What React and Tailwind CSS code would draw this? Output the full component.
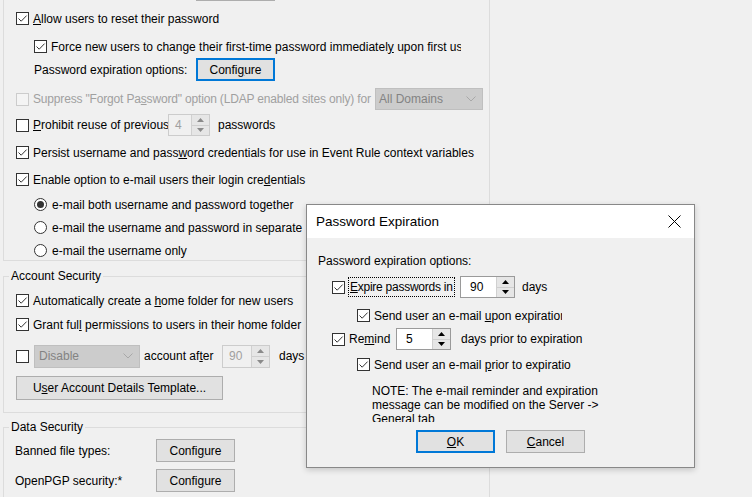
import React from "react";

function Check({ checked = false, disabled = false }) {
  return (
    <span
      className={
        disabled
          ? "flex h-[13px] w-[13px] shrink-0 items-center justify-center border border-[#cccccc] bg-[#f4f4f4]"
          : "flex h-[13px] w-[13px] shrink-0 items-center justify-center border border-[#333333] bg-white"
      }
    >
      {checked && (
        <svg width="11" height="11" viewBox="0 0 11 11">
          <path d="M1.5 5.5 L4.2 8.2 L9.6 2.6" fill="none" stroke="#333333" strokeWidth="1" />
        </svg>
      )}
    </span>
  );
}

function Radio({ selected = false }) {
  return (
    <span className="flex h-[13px] w-[13px] shrink-0 items-center justify-center rounded-full border border-[#333333] bg-white">
      {selected && <span className="h-[7px] w-[7px] rounded-full bg-[#333333]" />}
    </span>
  );
}

function Arrows({ disabled = false }) {
  const c = disabled ? "#8a8a8a" : "#000000";
  return (
    <div className="flex w-[18px] shrink-0 flex-col border-l border-[#d0d0d0] bg-[#e6e6e6]">
      <div className="flex flex-1 items-center justify-center border-b border-[#cfcfcf]">
        <svg width="7" height="4" viewBox="0 0 7 4">
          <path d="M0 4 L3.5 0 L7 4 Z" fill={c} />
        </svg>
      </div>
      <div className="flex flex-1 items-center justify-center">
        <svg width="7" height="4" viewBox="0 0 7 4">
          <path d="M0 0 L3.5 4 L7 0 Z" fill={c} />
        </svg>
      </div>
    </div>
  );
}

function Btn({ children, focused = false, className = "" }) {
  return (
    <div
      className={
        (focused
          ? "flex shrink-0 items-center justify-center border-2 border-[#0078d7] bg-[#e1e1e1] "
          : "flex shrink-0 items-center justify-center border border-[#adadad] bg-[#e1e1e1] ") + className
      }
    >
      {children}
    </div>
  );
}

function Chevron() {
  return (
    <svg width="10" height="6" viewBox="0 0 10 6">
      <path d="M0.5 0.5 L5 5 L9.5 0.5" fill="none" stroke="#a8a8a8" strokeWidth="1" />
    </svg>
  );
}

export default function App() {
  return (
    <div className="relative h-[497px] w-[752px] overflow-hidden bg-[#f0f0f0] font-['Liberation_Sans',Arial,sans-serif] text-[12px] leading-[14px] text-black">
      <div className="h-full w-[490px] border-r border-[#dcdcdc]">
        {/* Group 1 */}
        <div className="ml-[3px] flex h-[261px] w-[486px] flex-col border-b border-l border-[#dcdcdc]">
          <div className="ml-[192px] h-[1px] w-[79px] shrink-0 bg-[#adadad]" />
          <div className="mt-[11px] flex h-[13px] items-center pl-[12px]">
            <Check checked />
            <span className="ml-[4px] whitespace-nowrap">
              <u>A</u>llow users to reset their password
            </span>
          </div>
          <div className="mt-[15px] flex h-[13px] items-center pl-[30px]">
            <Check checked />
            <span className="ml-[4px] w-[410px] overflow-hidden whitespace-nowrap">
              Force new users to change their first-time password immediatel<u>y</u> upon first use
            </span>
          </div>
          <div className="mt-[5px] flex h-[23px] items-center pl-[30px]">
            <span className="w-[162px] whitespace-nowrap">Password expiration options:</span>
            <Btn focused className="h-[23px] w-[79px]">
              <span>
                Confi<u>g</u>ure
              </span>
            </Btn>
          </div>
          <div className="mt-[7px] flex h-[22px] items-center pl-[12px]">
            <Check disabled />
            <span className="ml-[4px] w-[342px] whitespace-nowrap tracking-[-0.17px] text-[#a0a0a0]">
              Suppress "Forgot Pa<u>s</u>sword" option (LDAP enabled sites only) for
            </span>
            <div className="flex h-[22px] w-[108px] items-center justify-between border border-[#bfbfbf] bg-[#cccccc] pl-[3px] pr-[6px] text-[#838383]">
              <span>All Domains</span>
              <Chevron />
            </div>
          </div>
          <div className="mt-[4px] flex h-[22px] items-center pl-[12px]">
            <Check />
            <span className="ml-[4px] w-[135px] whitespace-nowrap">
              <u>P</u>rohibit reuse of previous
            </span>
            <div className="flex h-[22px] w-[42px] border border-[#cccccc] bg-[#f0f0f0]">
              <div className="flex flex-1 items-center pl-[6px] text-[#a0a0a0]">4</div>
              <Arrows disabled />
            </div>
            <span className="ml-[8px]">passwords</span>
          </div>
          <div className="mt-[10px] flex h-[13px] items-center pl-[12px]">
            <Check checked />
            <span className="ml-[4px] whitespace-nowrap">
              Persist username and pass<u>w</u>ord credentials for use in Event Rule context variables
            </span>
          </div>
          <div className="mt-[14px] flex h-[13px] items-center pl-[12px]">
            <Check checked />
            <span className="ml-[4px] whitespace-nowrap">
              Enable option to e-mail users their login cre<u>d</u>entials
            </span>
          </div>
          <div className="mt-[12px] flex h-[13px] items-center pl-[30px]">
            <Radio selected />
            <span className="ml-[5px] whitespace-nowrap">e-mail both username and password together</span>
          </div>
          <div className="mt-[10px] flex h-[13px] items-center pl-[30px]">
            <Radio />
            <span className="ml-[5px] w-[253px] overflow-hidden whitespace-nowrap">e-mail the username and password in separate e-mails</span>
          </div>
          <div className="mt-[10px] flex h-[13px] items-center pl-[30px]">
            <Radio />
            <span className="ml-[5px] whitespace-nowrap">e-mail the username only</span>
          </div>
        </div>

        {/* Account Security */}
        <div className="relative ml-[3px] mt-[15px] flex h-[137px] w-[486px] flex-col border-b border-l border-t border-[#dcdcdc]">
          <span className="absolute left-[5px] top-[-8px] bg-[#f0f0f0] px-[2px]">Account Security</span>
          <div className="mt-[17px] flex h-[13px] items-center pl-[12px]">
            <Check checked />
            <span className="ml-[4px] whitespace-nowrap">
              Automatically create a <u>h</u>ome folder for new users
            </span>
          </div>
          <div className="mt-[11px] flex h-[13px] items-center pl-[12px]">
            <Check checked />
            <span className="ml-[4px] whitespace-nowrap">
              Grant ful<u>l</u> permissions to users in their home folder
            </span>
          </div>
          <div className="mt-[13px] flex h-[24px] items-center pl-[12px]">
            <Check />
            <div className="ml-[5px] flex h-[23px] w-[106px] items-center justify-between border border-[#bfbfbf] bg-[#cccccc] pl-[4px] pr-[6px] text-[#838383]">
              <span>Disable</span>
              <Chevron />
            </div>
            <span className="ml-[4px] w-[78px] whitespace-nowrap">
              account af<u>t</u>er
            </span>
            <div className="flex h-[23px] w-[48px] border border-[#cccccc] bg-[#f0f0f0]">
              <div className="flex flex-1 items-center pl-[6px] text-[#a0a0a0]">90</div>
              <Arrows disabled />
            </div>
            <span className="ml-[9px]">days</span>
          </div>
          <div className="mt-[8px] flex h-[24px] items-center pl-[12px]">
            <Btn className="h-[24px] w-[207px]">
              <span>
                U<u>s</u>er Account Details Template...
              </span>
            </Btn>
          </div>
        </div>

        {/* Data Security */}
        <div className="relative ml-[3px] mt-[14px] flex h-[90px] w-[486px] flex-col border-b border-l border-t border-[#dcdcdc]">
          <span className="absolute left-[5px] top-[-8px] bg-[#f0f0f0] px-[2px]">Data Security</span>
          <div className="mt-[11px] flex h-[23px] items-center pl-[11px]">
            <span className="w-[141px] whitespace-nowrap">Banned file types:</span>
            <Btn className="h-[23px] w-[79px]">
              <span>
                Confi<u>g</u>ure
              </span>
            </Btn>
          </div>
          <div className="mt-[7px] flex h-[23px] items-center pl-[11px]">
            <span className="w-[141px] whitespace-nowrap">OpenPGP security:*</span>
            <Btn className="h-[23px] w-[79px]">
              <span>
                Confi<u>g</u>ure
              </span>
            </Btn>
          </div>
        </div>
      </div>

      {/* Dialog */}
      <div className="absolute left-[306px] top-[204px] flex h-[264px] w-[389px] flex-col border border-[#888888] bg-[#f0f0f0] shadow-[0_2px_6px_rgba(0,0,0,0.18)]">
        <div className="flex h-[33px] shrink-0 items-center justify-between bg-white pl-[9px] pr-[13px]">
          <span className="text-[13.5px]">Password Expiration</span>
          <svg width="13" height="13" viewBox="0 0 13 13">
            <path d="M0.5 0.5 L12.5 12.5 M12.5 0.5 L0.5 12.5" fill="none" stroke="#000000" strokeWidth="1" />
          </svg>
        </div>
        <div className="mt-[16px] flex h-[14px] items-center pl-[11px]">
          <span>Password expiration options:</span>
        </div>
        <div className="mt-[8px] flex h-[22px] items-center pl-[25px]">
          <Check checked />
          <span className="ml-[3px] flex h-[20px] w-[107px] items-center border border-dotted border-black pl-[1px] whitespace-nowrap tracking-[-0.25px]">
            <span>
              <u>E</u>xpire passwords in
            </span>
          </span>
          <div className="ml-[5px] flex h-[22px] w-[55px] border border-[#9a9a9a] bg-white">
            <div className="flex flex-1 items-center pl-[9px]">90</div>
            <Arrows />
          </div>
          <span className="ml-[7px]">days</span>
        </div>
        <div className="mt-[11px] flex h-[13px] items-center pl-[50px]">
          <Check checked />
          <span className="ml-[4px] w-[188px] overflow-hidden whitespace-nowrap">
            Send user an e-mail <u>u</u>pon expiration
          </span>
        </div>
        <div className="mt-[6px] flex h-[22px] items-center pl-[25px]">
          <Check checked />
          <span className="ml-[4px] w-[47px] whitespace-nowrap">
            Re<u>m</u>ind
          </span>
          <div className="flex h-[22px] w-[55px] border border-[#9a9a9a] bg-white">
            <div className="flex flex-1 items-center pl-[9px]">5</div>
            <Arrows />
          </div>
          <span className="ml-[10px] whitespace-nowrap">days prior to expiration</span>
        </div>
        <div className="mt-[8px] flex h-[13px] items-center pl-[50px]">
          <Check checked />
          <span className="ml-[4px] w-[197px] overflow-hidden whitespace-nowrap">
            Send user an e-mail <u>p</u>rior to expiration
          </span>
        </div>
        <div className="mt-[13px] h-[38px] overflow-hidden pl-[65px] leading-[14px] whitespace-nowrap">
          NOTE: The e-mail reminder and expiration
          <br />
          message can be modified on the Server -&gt;
          <br />
          General tab
        </div>
        <div className="mt-[8px] flex h-[23px] items-center pl-[109px]">
          <Btn focused className="h-[23px] w-[79px]">
            <span>
              <u>O</u>K
            </span>
          </Btn>
          <Btn className="ml-[11px] h-[23px] w-[79px]">
            <span>
              <u>C</u>ancel
            </span>
          </Btn>
        </div>
      </div>
    </div>
  );
}
